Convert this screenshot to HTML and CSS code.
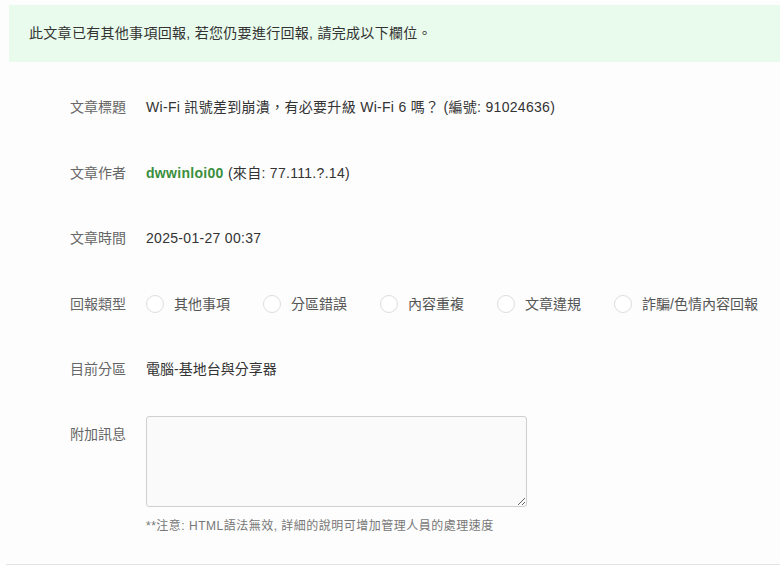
FILE: index.html
```html
<!DOCTYPE html>
<html lang="zh-Hant">
<head>
  <meta charset="UTF-8">
  <title>回報文章</title>
  <link rel="stylesheet" href="styles.css">
</head>
<body>
  <div class="report-box">
    <div class="notice">此文章已有其他事項回報, 若您仍要進行回報, 請完成以下欄位。</div>

    <form class="report-form" method="post">
      <div class="row">
        <div class="label">文章標題</div>
        <div class="value text">Wi-Fi 訊號差到崩潰，有必要升級 Wi-Fi 6 嗎？ (編號: 91024636)</div>
      </div>
      <div class="row">
        <div class="label">文章作者</div>
        <div class="value text"><a class="author" href="#">dwwinloi00</a> (來自: 77.111.?.14)</div>
      </div>
      <div class="row">
        <div class="label">文章時間</div>
        <div class="value text">2025-01-27 00:37</div>
      </div>
      <div class="row">
        <div class="label">回報類型</div>
        <div class="value radios">
          <label class="radio"><input type="radio" name="type" value="1"><span>其他事項</span></label>
          <label class="radio"><input type="radio" name="type" value="2"><span>分區錯誤</span></label>
          <label class="radio"><input type="radio" name="type" value="3"><span>內容重複</span></label>
          <label class="radio"><input type="radio" name="type" value="4"><span>文章違規</span></label>
          <label class="radio"><input type="radio" name="type" value="5"><span>詐騙/色情內容回報</span></label>
        </div>
      </div>
      <div class="row">
        <div class="label">目前分區</div>
        <div class="value">電腦-基地台與分享器</div>
      </div>
      <div class="row row-message">
        <div class="label">附加訊息</div>
        <div class="value">
          <textarea name="message"></textarea>
          <div class="hint">**注意: HTML語法無效, 詳細的說明可增加管理人員的處理速度</div>
        </div>
      </div>
    </form>
  </div>
</body>
</html>
```

FILE: styles.css
```css
body { margin: 0; background: #fdfdfd; font-family: "Liberation Sans", "Noto Sans CJK TC", sans-serif; font-size: 14px; color: #333; }
.report-box { padding: 5px 0 0 9px; }
.notice { background: #e8fbec; padding: 18px 20px 19px; line-height: 20px; color: #333; letter-spacing: 0.3px; }
.report-form { margin-left: -3px; padding: 35px 0 30px 64px; border-bottom: 1px solid #e3e3e3; }
.row { display: flex; align-items: flex-start; line-height: 20px; margin-bottom: 45.5px; }
.label { width: 76px; flex: none; color: #666; }
.value { color: #333; }
.value.text { letter-spacing: 0.3px; }
.author { color: #3a8f3e; font-weight: bold; text-decoration: none; }
.radios { display: flex; gap: 33px; }
.radio { display: flex; align-items: center; gap: 10px; color: #555; cursor: pointer; }
.radio input {
  appearance: none;
  -webkit-appearance: none;
  margin: 0;
  width: 18px;
  height: 18px;
  border: 1px solid #ddd;
  border-radius: 50%;
  background: #fff;
}
.radio input:checked { border: 5px solid #3a8f3e; }
.row-message { margin-top: -9px; margin-bottom: 0; }
.row-message .label { padding-top: 8px; }
textarea {
  display: block;
  width: 381px;
  height: 91px;
  box-sizing: border-box;
  border: 1px solid #cfcfcf;
  border-radius: 3px;
  background: #fafafa;
  resize: vertical;
}
.hint { margin-top: 11px; font-size: 12px; color: #777; line-height: 16px; letter-spacing: 0.5px; }
```
